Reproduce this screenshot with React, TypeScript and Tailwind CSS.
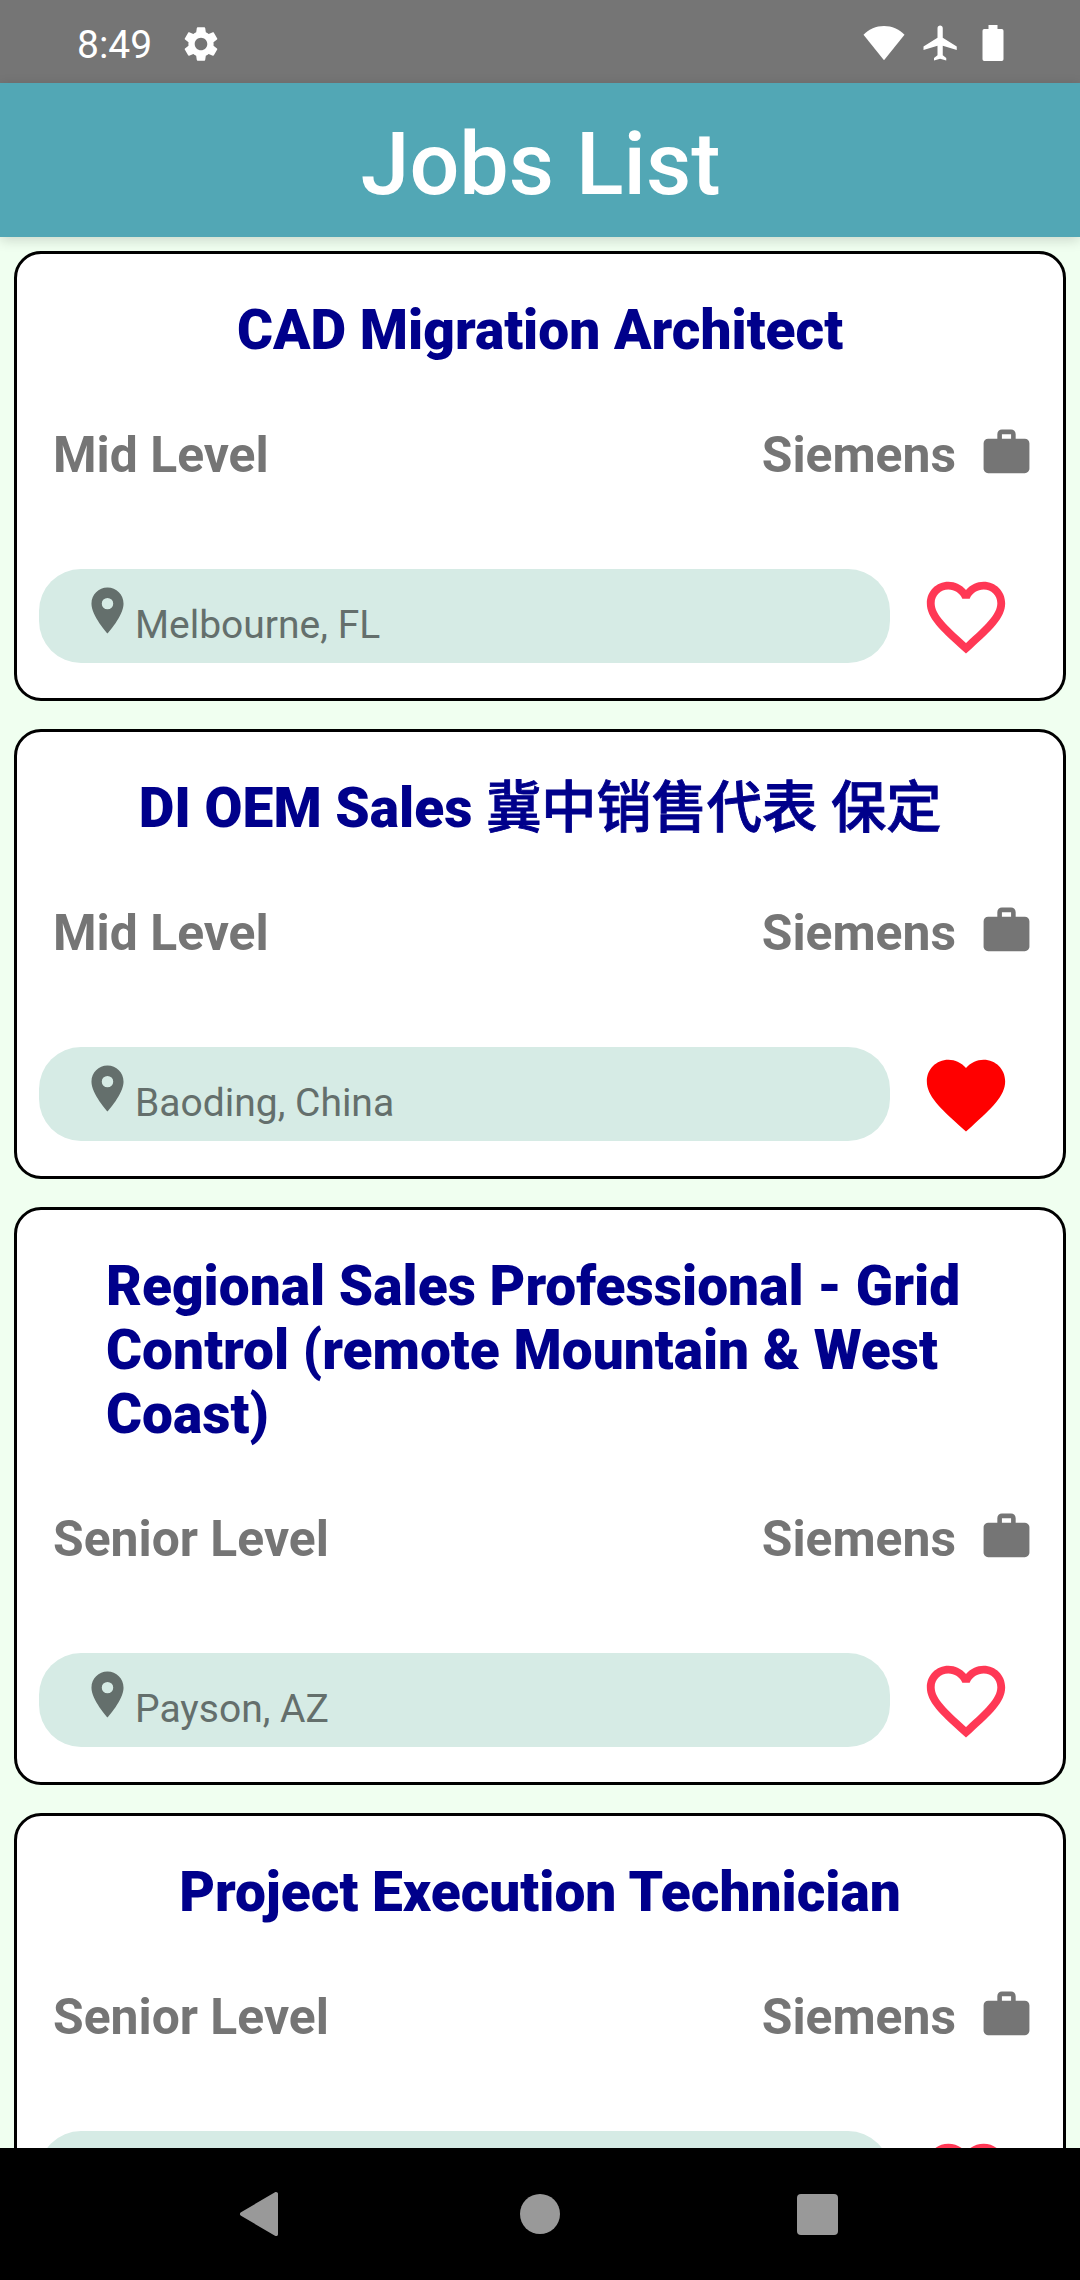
type Job = { title: string; titleCjk?: string; level: string; company: string; place: string; liked?: boolean };

const jobs: Job[] = [
  { title: "CAD Migration Architect", level: "Mid Level", company: "Siemens", place: "Melbourne, FL" },
  { title: "DI OEM Sales ", titleCjk: "冀中销售代表 保定", level: "Mid Level", company: "Siemens", place: "Baoding, China", liked: true },
  {
    title: "Regional Sales Professional - Grid Control (remote Mountain & West Coast)",
    level: "Senior Level",
    company: "Siemens",
    place: "Payson, AZ",
  },
  { title: "Project Execution Technician", level: "Senior Level", company: "Siemens", place: "" },
];

function Icon({ d, className }: { d: string; className: string }) {
  return (
    <svg viewBox="0 0 24 24" fill="currentColor" className={className}>
      <path d={d} />
    </svg>
  );
}

const GEAR =
  "M19.14 12.94c.04-.3.06-.61.06-.94 0-.32-.02-.64-.07-.94l2.03-1.58c.18-.14.23-.41.12-.61l-1.92-3.32c-.12-.22-.37-.29-.59-.22l-2.39.96c-.5-.38-1.03-.7-1.62-.94l-.36-2.54c-.04-.24-.24-.41-.48-.41h-3.84c-.24 0-.43.17-.47.41l-.36 2.54c-.59.24-1.13.57-1.62.94l-2.39-.96c-.22-.08-.47 0-.59.22L2.74 8.87c-.12.21-.08.47.12.61l2.03 1.58c-.05.3-.09.63-.09.94s.02.64.07.94l-2.03 1.58c-.18.14-.23.41-.12.61l1.92 3.32c.12.22.37.29.59.22l2.39-.96c.5.38 1.03.7 1.62.94l.36 2.54c.05.24.24.41.48.41h3.84c.24 0 .44-.17.47-.41l.36-2.54c.59-.24 1.13-.56 1.62-.94l2.39.96c.22.08.47 0 .59-.22l1.92-3.32c.12-.22.07-.47-.12-.61l-2.01-1.58zM12 15.6c-1.98 0-3.6-1.62-3.6-3.6s1.62-3.6 3.6-3.6 3.6 1.62 3.6 3.6-1.62 3.6-3.6 3.6z";
const PLANE =
  "M21 16v-2l-8-5V3.5c0-.83-.67-1.5-1.5-1.5S10 2.67 10 3.5V9l-8 5v2l8-2.5V19l-2 1.5V22l3.5-1 3.5 1v-1.5L13 19v-5.5l8 2.5z";
const PIN =
  "M12 2C8.13 2 5 5.13 5 9c0 5.25 7 13 7 13s7-7.75 7-13c0-3.87-3.13-7-7-7zm0 9.5a2.5 2.5 0 0 1 0-5 2.5 2.5 0 0 1 0 5z";
const WORK =
  "M20 6h-4V4c0-1.11-.89-2-2-2h-4c-1.11 0-2 .89-2 2v2H4c-1.11 0-1.99.89-1.99 2L2 19c0 1.11.89 2 2 2h16c1.11 0 2-.89 2-2V8c0-1.11-.89-2-2-2zm-6 0h-4V4h4v2z";
const HEART =
  "M12 21.35l-1.45-1.32C5.4 15.36 2 12.28 2 8.5 2 5.42 4.42 3 7.5 3c1.74 0 3.41.81 4.5 2.09C13.09 3.81 14.76 3 16.5 3 19.58 3 22 5.42 22 8.5c0 3.78-3.4 6.86-8.55 11.54L12 21.35z";
const HEART_OUTLINE =
  "M16.5 3c-1.74 0-3.41.81-4.5 2.09C10.91 3.81 9.24 3 7.5 3 4.42 3 2 5.42 2 8.5c0 3.78 3.4 6.86 8.55 11.54L12 21.35l1.45-1.32C18.6 15.36 22 12.28 22 8.5 22 5.42 19.58 3 16.5 3zm-4.4 15.55l-.1.1-.1-.1C7.14 14.24 4 11.39 4 8.5 4 6.5 5.5 5 7.5 5c1.54 0 3.04.99 3.57 2.36h1.87C13.46 5.99 14.96 5 16.5 5c2 0 3.5 1.5 3.5 3.5 0 2.89-3.14 5.74-7.9 10.05z";

function StatusBar() {
  return (
    <div className="flex h-[83px] shrink-0 items-center bg-[#757575] text-white">
      <span className="ml-[77px] w-[103px] pt-[6px] text-[39px] leading-[46px]">8:49</span>
      <Icon d={GEAR} className="mt-1 size-[42px]" />
      <svg viewBox="0 0 42 36" fill="currentColor" className="mt-0.5 ml-auto h-9 w-[42px]">
        <path d="M21 35.3 0.5 9.7C6 4 13 1 21 1s15 3 20.500 8.700z" />
      </svg>
      <Icon d={PLANE} className="mt-[3px] ml-[15px] size-[42px]" />
      <svg viewBox="0 0 22 36" fill="currentColor" className="mt-[3px] mr-[76px] ml-[20px] h-9 w-[22px]">
        <path d="M6.500 0h9v4h4.300a1.700 1.700 0 0 1 1.700 1.700v28.600a1.700 1.700 0 0 1-1.700 1.700H2.200a1.700 1.700 0 0 1-1.700-1.700V5.700A1.700 1.700 0 0 1 2.200 4h4.300z" />
      </svg>
    </div>
  );
}

function JobCard({ job }: { job: Job }) {
  return (
    <article className="flex shrink-0 flex-col rounded-[27px] border-3 border-black bg-white px-[22px] pt-[44px] pb-[35px]">
      <div className="flex justify-center px-[67px]">
        <h2 className="text-[55.05px] leading-[64px] font-black text-[#00008b]">
          {job.title}
          {job.titleCjk && (
            <span className="text-[55.2px] font-medium [-webkit-text-stroke:0.9px_#00008b]">{job.titleCjk}</span>
          )}
        </h2>
      </div>
      <div className="mt-[63px] flex h-[60px] items-center justify-between pr-[7px] pl-[14px] text-[49.8px] leading-[60px] font-bold text-[#757575]">
        <span>{job.level}</span>
        <div className="flex items-center gap-[23px]">
          <span>{job.company}</span>
          <Icon d={WORK} className="mb-1.5 size-[55px]" />
        </div>
      </div>
      <div className="mt-[84px] flex h-[94px]">
        <div className="flex h-[94px] w-[851px] items-start rounded-[42px] bg-[#d6ebe5] pl-[41px] text-[#646f6c]">
          <Icon d={PIN} className="mt-[14px] size-[55px]" />
          <span className="mt-[33px] text-[39px] leading-[46px]">{job.place}</span>
        </div>
        <Icon
          d={job.liked ? HEART : HEART_OUTLINE}
          className={
            job.liked ? "mt-px ml-[29px] size-[94px] text-[#ff0000]" : "mt-px ml-[29px] size-[94px] text-[#ff3855]"
          }
        />
      </div>
    </article>
  );
}

export default function App() {
  return (
    <div className="flex h-[2280px] w-[1080px] flex-col overflow-hidden bg-[#f0fff0] font-['Roboto','Noto_Sans_CJK_SC',sans-serif]">
      <StatusBar />
      <header className="z-10 flex h-[154px] shrink-0 items-center justify-center bg-[#52a7b5] shadow-[0_3px_12px_rgba(0,0,0,0.16)]">
        <h1 className="pt-[7px] pl-px text-[88px] leading-[104px] font-medium text-white">Jobs List</h1>
      </header>
      <main className="flex min-h-0 flex-1 flex-col gap-[28px] overflow-hidden px-[14px] pt-[14px]">
        {jobs.map((job) => (
          <JobCard key={job.title} job={job} />
        ))}
      </main>
      <nav className="flex h-[132px] shrink-0 items-center bg-black pl-[239px] text-[#999999]">
        <svg viewBox="0 0 40 46" fill="currentColor" className="h-[46px] w-[40px]">
          <path d="M36 1.200 2 21.200c-1.500 1-1.500 2.600 0 3.600l34 20c1.300.8 3 0 3-1.600V2.800C39 1.200 37.300.4 36 1.200z" />
        </svg>
        <span className="ml-[241px] size-[40px] rounded-full bg-[#999999]" />
        <span className="ml-[237px] size-[41px] rounded-[4px] bg-[#999999]" />
      </nav>
    </div>
  );
}
